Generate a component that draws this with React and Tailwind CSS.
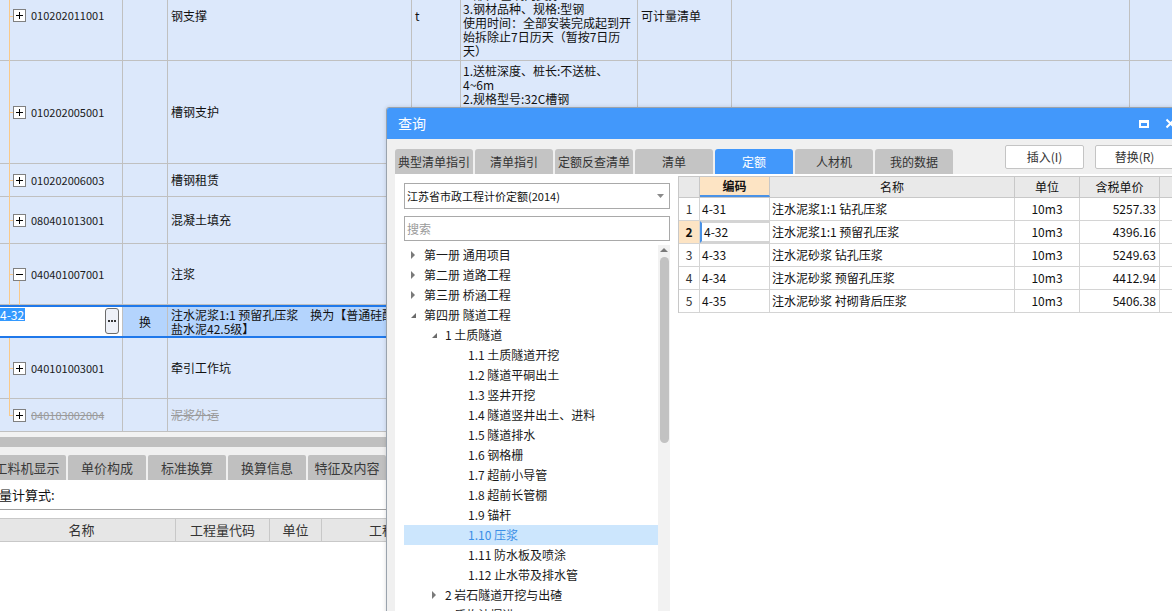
import React from 'react';

const mainRows = [
  {
    h: 'h-[90px]',
    code: '010202011001',
    name: '钢支撑',
    unit: 't',
    desc: ['1.材质:型钢', '2.部位:基坑内支撑', '3.钢材品种、规格:型钢', '使用时间：全部安装完成起到开', '始拆除止7日历天（暂按7日历', '天）'],
    type: '可计量清单',
  },
  {
    h: 'h-[103px]',
    code: '010202005001',
    name: '槽钢支护',
    desc: ['1.送桩深度、桩长:不送桩、', '4~6m', '2.规格型号:32C槽钢', '3.其他:满足设计要求'],
  },
  { h: 'h-[33px]', code: '010202006003', name: '槽钢租赁' },
  { h: 'h-[47px]', code: '080401013001', name: '混凝土填充' },
  { h: 'h-[61px]', code: '040401007001', name: '注浆', minus: true },
];

const mainRowsAfter = [
  { h: 'h-[61px]', code: '040101003001', name: '牵引工作坑' },
  { h: 'h-[33px]', code: '040103002004', name: '泥浆外运', strike: true, last: true },
];

function Box({ minus }) {
  return (
    <div className="relative w-[13px] h-[13px] border border-[#808080] bg-white shrink-0">
      <div className="absolute left-[2px] top-[5px] w-[7px] h-px bg-black" />
      {!minus && <div className="absolute left-[5px] top-[2px] w-px h-[7px] bg-black" />}
    </div>
  );
}

function MainRow({ r }) {
  return (
    <div className={`flex shrink-0 border-b border-[#c0c0c0] bg-[#dce8fb] ${r.h}`}>
      <div className="relative w-[123px] shrink-0 border-r border-[#c0c0c0] flex items-center">
        <div className={`absolute left-[9px] top-0 w-px bg-[#f9c98a] ${r.last ? 'h-1/2' : 'h-[calc(100%+1px)]'}`} />
        <div className="absolute left-[9px] top-1/2 w-[4px] h-px bg-[#f9c98a]" />
        {r.minus && <div className="absolute left-[19px] top-[calc(50%+7px)] bottom-[-1px] w-px bg-[#f9c98a]" />}
        <div className="ml-[13px]">
          <Box minus={r.minus} />
        </div>
        <span className={`ml-[5px] text-[11px] ${r.strike ? 'text-[#9a9a9a] line-through' : 'text-[#1a1a1a]'}`}>{r.code}</span>
      </div>
      <div className="w-[45px] shrink-0 border-r border-[#c0c0c0]" />
      <div className={`w-[244px] shrink-0 border-r border-[#c0c0c0] flex items-center pl-[3px] ${r.strike ? 'text-[#9a9a9a] line-through' : ''}`}>{r.name}</div>
      <div className="w-[49px] shrink-0 border-r border-[#c0c0c0] flex items-center pl-[3px]">{r.unit}</div>
      <div className="w-[177px] shrink-0 border-r border-[#c0c0c0] pl-[2px] pt-[3px] leading-[14px] overflow-hidden">
        {(r.desc || []).map((d, i) => (
          <div key={i} className="whitespace-nowrap">{d}</div>
        ))}
      </div>
      <div className="w-[94px] shrink-0 border-r border-[#c0c0c0] flex items-center pl-[3px]">{r.type}</div>
      <div className="w-[398px] shrink-0 border-r border-[#c0c0c0]" />
      <div className="flex-1" />
    </div>
  );
}

function SelectedRow() {
  return (
    <div className="flex shrink-0 h-[33px] border-y-2 border-[#1f78ea] bg-[#b4d4fd]">
      <div className="w-[123px] shrink-0 bg-white border-r border-[#c0c0c0] flex items-start justify-between pt-[1px] pr-[3px]">
        <span className="ml-[-1px] bg-[#3399ff] text-white leading-[13px] px-px">4-32</span>
        <div className="w-[14px] h-[26px] border border-[#6c6c6c] rounded-[3px] bg-[#eef1f8] flex items-center justify-center gap-[1px]">
          <div className="w-[2px] h-[2px] bg-[#333]" />
          <div className="w-[2px] h-[2px] bg-[#333]" />
          <div className="w-[2px] h-[2px] bg-[#333]" />
        </div>
      </div>
      <div className="w-[45px] shrink-0 border-r border-[#c0c0c0] flex items-center justify-center">换</div>
      <div className="w-[244px] shrink-0 border-r border-[#c0c0c0] pl-[3px] pt-[1px] leading-[14px] overflow-hidden">
        <div className="whitespace-nowrap">注水泥浆1:1 预留孔压浆　换为【普通硅酸</div>
        <div className="whitespace-nowrap">盐水泥42.5级】</div>
      </div>
      <div className="w-[49px] shrink-0 border-r border-[#c0c0c0]" />
      <div className="w-[177px] shrink-0 border-r border-[#c0c0c0]" />
      <div className="w-[94px] shrink-0 border-r border-[#c0c0c0]" />
      <div className="w-[398px] shrink-0 border-r border-[#c0c0c0]" />
      <div className="flex-1" />
    </div>
  );
}

function BottomArea() {
  const tabs = ['工料机显示', '单价构成', '标准换算', '换算信息', '特征及内容'];
  return (
    <div className="flex flex-col w-[386px] flex-1 bg-white overflow-hidden">
      <div className="h-[5px] shrink-0 bg-[#f2f2f2]" />
      <div className="h-[10px] shrink-0 bg-[#bfbfbf]" />
      <div className="h-[8px] shrink-0 bg-[#f0f0f0]" />
      <div className="h-[25px] shrink-0 flex gap-[2px] ml-[-12px] bg-[#f0f0f0]">
        {tabs.map((t) => (
          <div key={t} className="w-[78px] shrink-0 bg-[#c0c0c0] rounded-t-[2px] flex items-center justify-center text-[13px] text-[#3a3a3a]">{t}</div>
        ))}
      </div>
      <div className="h-[30px] shrink-0 border-b border-[#a0a0a0] flex items-center">
        <span className="ml-[-27px] text-[13px] text-[#111] whitespace-nowrap">工程量计算式:</span>
      </div>
      <div className="h-[8px] shrink-0" />
      <div className="h-[24px] shrink-0 flex bg-[#e6e6e6] border-y border-[#c8c8c8] text-[13px] text-[#333]">
        <div className="w-[176px] shrink-0 border-r border-[#c8c8c8] flex items-center justify-center pr-[12px]">名称</div>
        <div className="w-[94px] shrink-0 border-r border-[#c8c8c8] flex items-center justify-center">工程量代码</div>
        <div className="w-[52px] shrink-0 border-r border-[#c8c8c8] flex items-center justify-center">单位</div>
        <div className="w-[172px] shrink-0 flex items-center justify-center whitespace-nowrap">工程量表达式</div>
      </div>
      <div className="flex-1 bg-white" />
    </div>
  );
}

const treeItems = [
  { lvl: 0, arrow: 'right', text: '第一册 通用项目' },
  { lvl: 0, arrow: 'right', text: '第二册 道路工程' },
  { lvl: 0, arrow: 'right', text: '第三册 桥涵工程' },
  { lvl: 0, arrow: 'down', text: '第四册 隧道工程' },
  { lvl: 1, arrow: 'down', text: '1 土质隧道' },
  { lvl: 2, text: '1.1 土质隧道开挖' },
  { lvl: 2, text: '1.2 隧道平硐出土' },
  { lvl: 2, text: '1.3 竖井开挖' },
  { lvl: 2, text: '1.4 隧道竖井出土、进料' },
  { lvl: 2, text: '1.5 隧道排水' },
  { lvl: 2, text: '1.6 钢格栅' },
  { lvl: 2, text: '1.7 超前小导管' },
  { lvl: 2, text: '1.8 超前长管棚' },
  { lvl: 2, text: '1.9 锚杆' },
  { lvl: 2, text: '1.10 压浆', sel: true },
  { lvl: 2, text: '1.11 防水板及喷涂' },
  { lvl: 2, text: '1.12 止水带及排水管' },
  { lvl: 1, arrow: 'right', text: '2 岩石隧道开挖与出碴' },
  { lvl: 1, arrow: 'right', text: '3 盾构法掘进' },
];

function Arrow({ dir }) {
  if (dir === 'right') {
    return (
      <svg width="8" height="10" viewBox="0 0 8 10" className="shrink-0">
        <path d="M2 1 L6 5 L2 9 Z" fill="#7a7a7a" />
      </svg>
    );
  }
  return (
    <svg width="8" height="10" viewBox="0 0 8 10" className="shrink-0">
      <path d="M7 3 L7 8 L2 8 Z" fill="#6a6a6a" />
    </svg>
  );
}

function TreeRow({ it }) {
  const pad = it.lvl === 0 ? 'pl-[5px]' : it.lvl === 1 ? 'pl-[26px]' : 'pl-[64px]';
  return (
    <div className={`h-[20px] shrink-0 flex items-center ${pad} ${it.sel ? 'bg-[#cce6fd] text-[#3b8ee6]' : 'text-[#1a1a1a]'}`}>
      {it.arrow && <Arrow dir={it.arrow} />}
      <span className={it.arrow ? 'ml-[7px] whitespace-nowrap' : 'whitespace-nowrap'}>{it.text}</span>
    </div>
  );
}

const quotaRows = [
  ['1', '4-31', '注水泥浆1:1 钻孔压浆', '10m3', '5257.33'],
  ['2', '4-32', '注水泥浆1:1 预留孔压浆', '10m3', '4396.16'],
  ['3', '4-33', '注水泥砂浆 钻孔压浆', '10m3', '5249.63'],
  ['4', '4-34', '注水泥砂浆 预留孔压浆', '10m3', '4412.94'],
  ['5', '4-35', '注水泥砂浆 衬砌背后压浆', '10m3', '5406.38'],
];

function Dialog() {
  const tabs = ['典型清单指引', '清单指引', '定额反查清单', '清单', '定额', '人材机', '我的数据'];
  return (
    <div className="absolute left-[386px] top-[107px] w-[800px] h-[520px] border border-[#9aa3ad] rounded-tl-[3px] bg-[#f0f0f0] flex flex-col overflow-hidden shadow-[0_0_4px_rgba(0,0,0,0.15)]">
      <div className="h-[31px] shrink-0 bg-[#4298fb] flex items-center pl-[11px] pr-[9px] text-white">
        <span className="text-[14px]">查询</span>
        <div className="ml-auto flex items-center gap-[16px]">
          <div className="w-[10px] h-[8px] border-2 border-t-[3px] border-white" />
          <svg width="11" height="11" viewBox="0 0 11 11">
            <path d="M1.5 1.5 L9.5 9.5 M9.5 1.5 L1.5 9.5" stroke="white" strokeWidth="2" />
          </svg>
        </div>
      </div>
      <div className="h-[35px] shrink-0 flex pl-[8px]">
        <div className="flex items-end gap-[2px]">
          {tabs.map((t) => (
            <div
              key={t}
              className={`w-[78px] h-[25px] rounded-t-[3px] flex items-center justify-center text-[12px] ${t === '定额' ? 'bg-[#4298fb] text-white' : 'bg-[#c4c4c4] text-[#333]'}`}
            >
              {t}
            </div>
          ))}
        </div>
        <div className="ml-[52px] pt-[6px] flex gap-[11px] items-start">
          <div className="w-[79px] h-[24px] bg-white border border-[#c4c4c4] rounded-[2px] flex items-center justify-center text-[12px] text-[#333]">插入(I)</div>
          <div className="w-[79px] h-[24px] bg-white border border-[#c4c4c4] rounded-[2px] flex items-center justify-center text-[12px] text-[#333]">替换(R)</div>
        </div>
      </div>
      <div className="flex-1 flex pl-[8px]">
        <div className="w-[283px] shrink-0 bg-white flex flex-col">
          <div className="ml-[9px] mt-[9px] w-[266px] h-[26px] border border-[#a9a9a9] flex items-center justify-between pl-[2px] pr-[5px]">
            <span className="text-[11px] text-[#111]">江苏省市政工程计价定额(2014)</span>
            <svg width="7" height="4" viewBox="0 0 7 4">
              <path d="M0 0 L7 0 L3.5 4 Z" fill="#8a8a8a" />
            </svg>
          </div>
          <div className="ml-[9px] mt-[7px] w-[266px] h-[25px] border border-[#a9a9a9] flex items-center pl-[2px] text-[12px] text-[#9a9a9a]">搜索</div>
          <div className="mt-[4px] flex flex-1 overflow-hidden">
            <div className="ml-[9px] w-[254px] shrink-0 flex flex-col text-[12px]">
              {treeItems.map((it) => (
                <TreeRow key={it.text} it={it} />
              ))}
            </div>
            <div className="w-[12px] shrink-0 bg-[#f2f2f2] flex flex-col items-center">
              <svg width="8" height="6" viewBox="0 0 8 6" className="mt-[2px]">
                <path d="M0 5 L4 1 L8 5 Z" fill="#7a7a7a" />
              </svg>
              <div className="mt-[4px] w-[9px] h-[186px] rounded-full bg-[#c2c2c2]" />
            </div>
          </div>
        </div>
        <div className="flex-1 bg-white pt-[2px]">
          <div className="flex flex-col border-l border-[#c8c8c8] text-[12px] text-[#111]">
            <div className="flex h-[22px] bg-[#e9e9e9] border-y border-[#c8c8c8]">
              <div className="w-[21px] shrink-0 border-r border-[#c8c8c8]" />
              <div className="w-[70px] shrink-0 border-r border-[#c8c8c8] bg-[#fde4c4] border-b-2 border-b-[#4a92e6] flex items-center justify-center font-bold">编码</div>
              <div className="w-[245px] shrink-0 border-r border-[#c8c8c8] flex items-center justify-center">名称</div>
              <div className="w-[65px] shrink-0 border-r border-[#c8c8c8] flex items-center justify-center">单位</div>
              <div className="w-[80px] shrink-0 border-r border-[#c8c8c8] flex items-center justify-center">含税单价</div>
              <div className="flex-1" />
            </div>
            {quotaRows.map((r) => (
              <div key={r[0]} className="flex h-[23px] border-b border-[#d4d4d4]">
                <div className={`w-[21px] shrink-0 border-r border-[#d4d4d4] flex items-center justify-center ${r[0] === '2' ? 'bg-[#fde4c4] font-bold' : 'text-[#333]'}`}>{r[0]}</div>
                <div className={`w-[70px] shrink-0 border-r border-[#d4d4d4] flex items-center pl-[2px] ${r[0] === '2' ? 'border-2 border-[#6e6e6e] border-l-[#4a92e6]' : ''}`}>{r[1]}</div>
                <div className="w-[245px] shrink-0 border-r border-[#d4d4d4] flex items-center pl-[2px] whitespace-nowrap">{r[2]}</div>
                <div className="w-[65px] shrink-0 border-r border-[#d4d4d4] flex items-center justify-center">{r[3]}</div>
                <div className="w-[80px] shrink-0 border-r border-[#d4d4d4] flex items-center justify-end pr-[3px]">{r[4]}</div>
                <div className="flex-1" />
              </div>
            ))}
          </div>
        </div>
      </div>
    </div>
  );
}

export default function App() {
  return (
    <div className="relative w-[1172px] h-[611px] overflow-hidden bg-white font-['Noto_Sans_CJK_SC','Liberation_Sans',sans-serif] text-[12px] text-[#111]">
      <div className="flex flex-col w-[1172px] h-[640px] mt-[-29px]">
        {mainRows.map((r) => (
          <MainRow key={r.code} r={r} />
        ))}
        <SelectedRow />
        {mainRowsAfter.map((r) => (
          <MainRow key={r.code} r={r} />
        ))}
        <BottomArea />
      </div>
      <Dialog />
    </div>
  );
}
